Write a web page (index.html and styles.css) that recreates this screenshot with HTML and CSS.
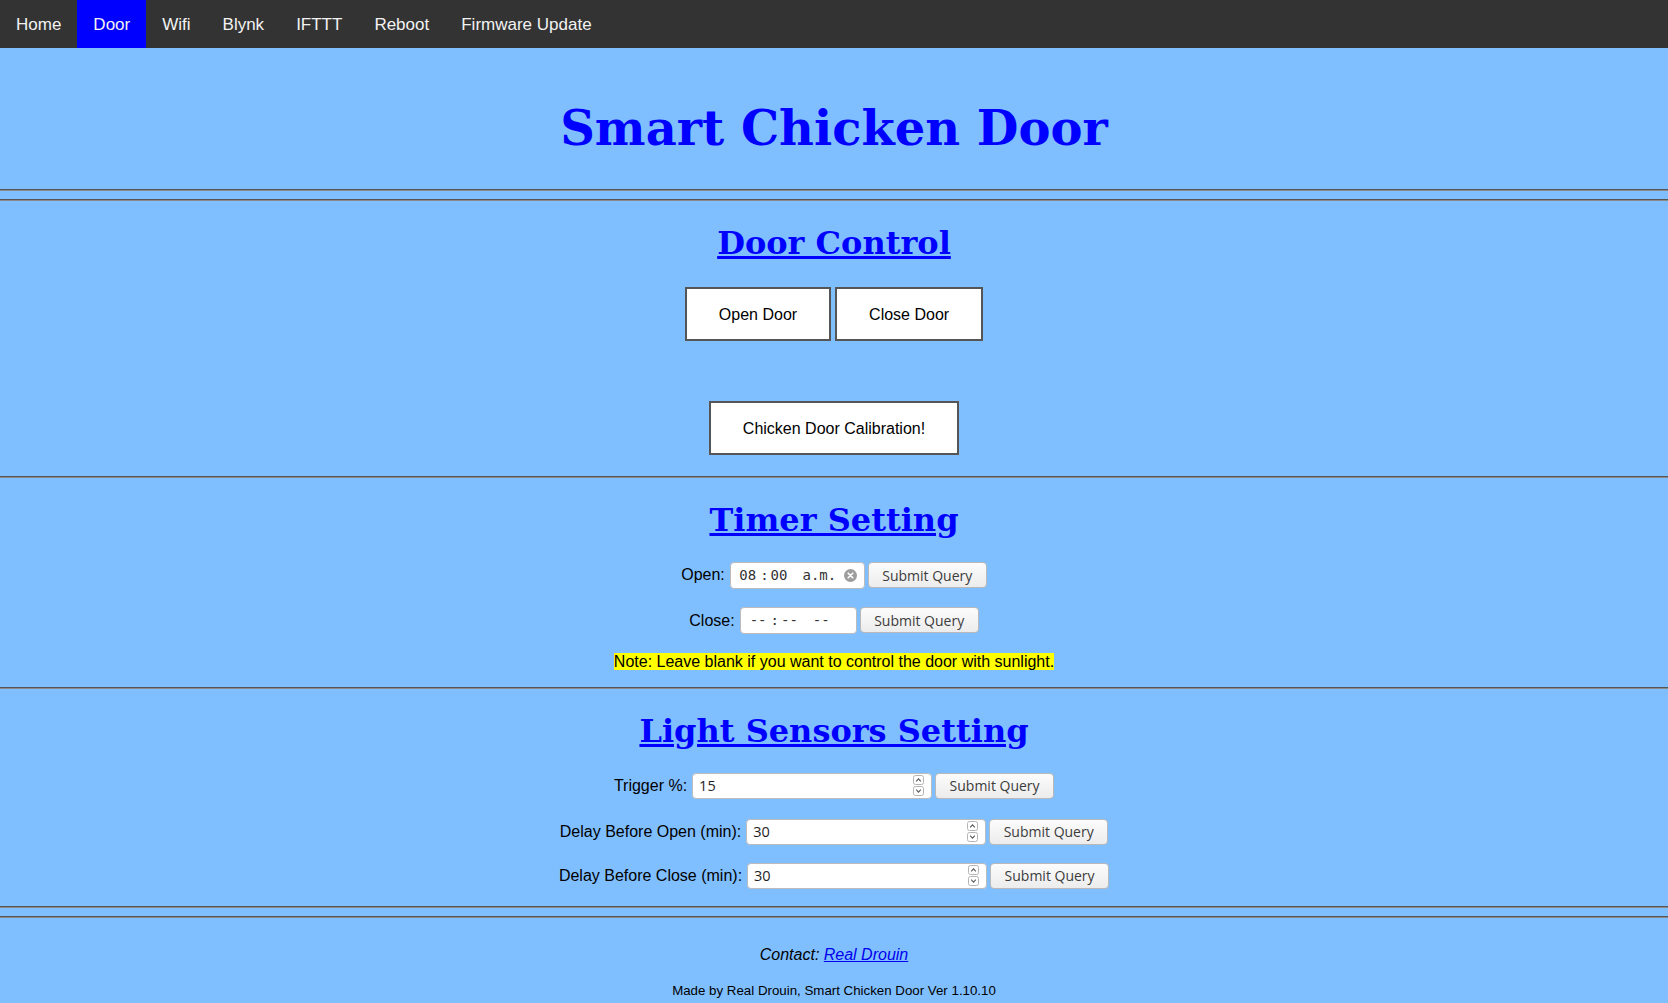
FILE: index.html
```html
<!DOCTYPE html>
<html lang="en">
<head>
<meta charset="utf-8">
<title>Smart Chicken Door</title>
<link rel="stylesheet" href="styles.css">
</head>
<body>
<nav class="topnav">
  <a href="#">Home</a>
  <a href="#" class="active">Door</a>
  <a href="#">Wifi</a>
  <a href="#">Blynk</a>
  <a href="#">IFTTT</a>
  <a href="#">Reboot</a>
  <a href="#">Firmware Update</a>
</nav>

<h1 class="title">Smart Chicken Door</h1>
<hr class="rule rule-after-title">
<hr class="rule rule-double">

<section class="door-section">
  <h2 class="heading"><a href="#">Door Control</a></h2>
  <div class="btn-row">
    <button class="big-btn">Open Door</button>
    <button class="big-btn">Close Door</button>
  </div>
  <div class="btn-row calib-row">
    <button class="big-btn calib">Chicken Door Calibration!</button>
  </div>
</section>

<hr class="rule rule-after-door">

<section class="timer-section">
  <h2 class="heading"><a href="#">Timer Setting</a></h2>
  <div class="field-row row-open">
    <label class="field-label">Open:</label>
    <span class="time-field time-open">
      <span class="t-hh">08</span><span class="t-sep">:</span><span class="t-mm">00</span><span class="t-ap">a.m.</span>
      <svg class="clear-icon" width="13" height="13" viewBox="0 0 13 13"><circle cx="6.5" cy="6.5" r="6.5" fill="#9d9d9d"/><path d="M4.2 4.2 L8.8 8.8 M8.8 4.2 L4.2 8.8" stroke="#fff" stroke-width="1.6" stroke-linecap="round"/></svg>
    </span>
    <button class="submit">Submit Query</button>
  </div>
  <div class="field-row row-close">
    <label class="field-label">Close:</label>
    <span class="time-field time-close">
      <span class="t-hh">--</span><span class="t-sep">:</span><span class="t-mm">--</span><span class="t-ap">--</span>
    </span>
    <button class="submit">Submit Query</button>
  </div>
  <div class="note"><mark class="note-mark">Note: Leave blank if you want to control the door with sunlight.</mark></div>
</section>

<hr class="rule rule-after-timer">

<section class="light-section">
  <h2 class="heading heading-light"><a href="#">Light Sensors Setting</a></h2>
  <div class="field-row row-trigger">
    <label class="field-label">Trigger %:</label>
    <span class="num-field"><span class="num-val">15</span>
      <svg class="spin" width="11" height="21" viewBox="0 0 11 21"><rect x="0.5" y="0.5" width="10" height="9" rx="2" fill="none" stroke="#b4b4b4"/><path d="M3.2 6.3 L5.5 3.8 L7.8 6.3" fill="none" stroke="#5a5a5a" stroke-width="1.1"/><rect x="0.5" y="11.5" width="10" height="9" rx="2" fill="none" stroke="#b4b4b4"/><path d="M3.2 14.7 L5.5 17.2 L7.8 14.7" fill="none" stroke="#5a5a5a" stroke-width="1.1"/></svg>
    </span>
    <button class="submit">Submit Query</button>
  </div>
  <div class="field-row row-delay-open">
    <label class="field-label">Delay Before Open (min):</label>
    <span class="num-field"><span class="num-val">30</span>
      <svg class="spin" width="11" height="21" viewBox="0 0 11 21"><rect x="0.5" y="0.5" width="10" height="9" rx="2" fill="none" stroke="#b4b4b4"/><path d="M3.2 6.3 L5.5 3.8 L7.8 6.3" fill="none" stroke="#5a5a5a" stroke-width="1.1"/><rect x="0.5" y="11.5" width="10" height="9" rx="2" fill="none" stroke="#b4b4b4"/><path d="M3.2 14.7 L5.5 17.2 L7.8 14.7" fill="none" stroke="#5a5a5a" stroke-width="1.1"/></svg>
    </span>
    <button class="submit">Submit Query</button>
  </div>
  <div class="field-row row-delay-close">
    <label class="field-label">Delay Before Close (min):</label>
    <span class="num-field"><span class="num-val">30</span>
      <svg class="spin" width="11" height="21" viewBox="0 0 11 21"><rect x="0.5" y="0.5" width="10" height="9" rx="2" fill="none" stroke="#b4b4b4"/><path d="M3.2 6.3 L5.5 3.8 L7.8 6.3" fill="none" stroke="#5a5a5a" stroke-width="1.1"/><rect x="0.5" y="11.5" width="10" height="9" rx="2" fill="none" stroke="#b4b4b4"/><path d="M3.2 14.7 L5.5 17.2 L7.8 14.7" fill="none" stroke="#5a5a5a" stroke-width="1.1"/></svg>
    </span>
    <button class="submit">Submit Query</button>
  </div>
</section>

<hr class="rule rule-after-light">
<hr class="rule rule-double">

<footer class="footer">
  <p class="contact">Contact: <a href="#">Real Drouin</a></p>
  <p class="made">Made by Real Drouin, Smart Chicken Door Ver 1.10.10</p>
</footer>
</body>
</html>
```

FILE: styles.css
```css
html, body {
  margin: 0;
  padding: 0;
}

body {
  background: #80bfff;
  font-family: "Liberation Sans", Arial, sans-serif;
  font-size: 16px;
  color: #000;
}

/* ---------- navigation ---------- */
.topnav {
  display: flex;
  background: #333333;
}

.topnav a {
  padding: 15px 16px 13px;
  font-size: 17px;
  line-height: 20px;
  color: #f2f2f2;
  text-decoration: none;
}

.topnav a.active {
  background: #0000ff;
  color: #f2f2f2;
}

/* ---------- title ---------- */
.title {
  margin: 52px 0 0;
  text-align: center;
  font-family: "DejaVu Serif", serif;
  font-size: 48px;
  line-height: 56px;
  font-weight: bold;
  color: #0000ff;
}

/* ---------- rules ---------- */
.rule {
  display: block;
  height: 0;
  margin: 0;
  border: 0;
  border-top: 1px solid #555555;
  border-bottom: 1px solid #8a8a8a;
}

.rule-after-title { margin-top: 33px; }
.rule-double { margin-top: 8px; }
.rule-after-door { margin-top: 21px; }
.rule-after-timer { margin-top: 16px; }
.rule-after-light { margin-top: 17.5px; }

/* ---------- headings ---------- */
.heading {
  margin: 24px 0 0;
  text-align: center;
  font-family: "DejaVu Serif", serif;
  font-size: 32px;
  line-height: 37px;
  font-weight: bold;
}

.heading-light { margin-top: 24px; }

.heading a {
  color: #0000ff;
  text-decoration: underline;
}

/* ---------- door buttons ---------- */
.btn-row {
  display: flex;
  justify-content: center;
  gap: 4px;
  margin-top: 25px;
}

.calib-row { margin-top: 60px; }

.big-btn {
  font-family: "Liberation Sans", Arial, sans-serif;
  font-size: 16px;
  line-height: 18px;
  padding: 17px 32px 15px;
  border: 2px solid #555555;
  background: #ffffff;
  color: #000;
  border-radius: 0;
}

/* ---------- field rows ---------- */
.field-row {
  display: flex;
  justify-content: center;
  align-items: center;
}

.row-open { margin-top: 22.5px; }
.row-close { margin-top: 18px; }
.row-trigger { margin-top: 23px; }
.row-delay-open { margin-top: 20px; }
.row-delay-close { margin-top: 18px; }

.field-label {
  margin-right: 5px;
  line-height: 18px;
}

.row-close .field-label { margin-top: 2px; }

.time-field {
  display: flex;
  align-items: center;
  box-sizing: border-box;
  height: 27px;
  padding-left: 8.5px;
  margin-right: 3px;
  background: #ffffff;
  border: 1px solid #bcbcbc;
  border-radius: 4px;
  font-family: "DejaVu Sans Mono", "Liberation Mono", monospace;
  font-size: 14px;
  color: #333333;
  white-space: pre;
}

.time-open { width: 135px; }
.time-close { width: 117px; padding-left: 9px; }

.t-hh { margin-right: 4px; }
.t-sep { margin-right: 2px; }
.t-mm { margin-right: 15px; }

.clear-icon {
  margin-left: auto;
  margin-right: 7px;
}

.num-field {
  display: flex;
  align-items: center;
  justify-content: space-between;
  box-sizing: border-box;
  width: 240px;
  height: 26px;
  padding: 0 7.5px 0 6px;
  margin-right: 3px;
  background: #ffffff;
  border: 1px solid #bcbcbc;
  border-radius: 4px;
  font-family: "Open Sans", "Noto Sans", sans-serif;
  font-size: 14.5px;
  color: #1e1e1e;
}

.spin { display: block; }

.submit {
  box-sizing: border-box;
  width: 119px;
  height: 26px;
  padding: 0;
  font-family: "Open Sans", "Noto Sans", sans-serif;
  font-size: 14px;
  color: #3c3c3c;
  background: linear-gradient(#fcfcfc, #ececec);
  border: 1px solid #b9b9b9;
  border-radius: 4px;
}

/* ---------- note ---------- */
.note {
  margin-top: 19px;
  text-align: center;
  line-height: 18.4px;
}

.note-mark {
  background: #ffff00;
  color: #000;
}

/* ---------- footer ---------- */
.footer {
  text-align: center;
}

.contact {
  margin: 28px 0 0;
  font-style: italic;
  line-height: 18.4px;
}

.contact a {
  color: #0000ee;
}

.made {
  margin: 18.5px 0 0;
  font-size: 13.3px;
  line-height: 15px;
}
```
